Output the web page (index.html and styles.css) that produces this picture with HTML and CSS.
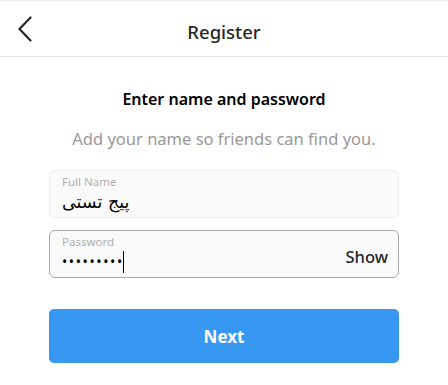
FILE: index.html
```html
<!DOCTYPE html>
<html lang="en">
<head>
<meta charset="utf-8">
<title>Register</title>
<link rel="stylesheet" href="styles.css">
</head>
<body>
<div class="page">
  <header class="header">
    <button class="back" aria-label="Back">
      <svg width="16" height="26" viewBox="0 0 16 26"><path d="M13.5 1.5 L2.5 13 L13.5 24.5" fill="none" stroke="#262626" stroke-width="2.2" stroke-linecap="round" stroke-linejoin="round"/></svg>
    </button>
    <h1 class="title">Register</h1>
  </header>
  <main class="content">
    <h2 class="heading">Enter name and password</h2>
    <p class="sub">Add your name so friends can find you.</p>
    <div class="field">
      <span class="label">Full Name</span>
      <span class="value rtl" dir="rtl">پیج تستی</span>
    </div>
    <div class="field focused">
      <div class="field-main">
        <span class="label">Password</span>
        <span class="value dots">•••••••••<span class="caret"></span></span>
      </div>
      <span class="show">Show</span>
    </div>
    <button class="next">Next</button>
  </main>
</div>
</body>
</html>
```
FILE: styles.css
```css
* { box-sizing: border-box; }
html, body { margin: 0; padding: 0; background: #fff; }
body { font-family: "Noto Sans", "Open Sans", sans-serif; color: #262626; }
.page { width: 448px; border-top: 1px solid #efefef; }
.header {
  height: 56px;
  padding-top: 6px;
  border-bottom: 1px solid #e6e6e6;
  display: flex;
  align-items: center;
  justify-content: center;
  position: relative;
}
.back {
  position: absolute;
  left: 17px;
  top: 14px;
  border: 0;
  background: none;
  padding: 0;
  width: 18px;
  height: 28px;
  display: flex;
  align-items: center;
}
.title { margin: 0; font-size: 18.5px; font-weight: 500; color: #262626; }
.content { padding: 0 49px; display: flex; flex-direction: column; }
.heading {
  margin: 22px 0 0;
  text-align: center;
  font-size: 16px;
  font-weight: 600;
  color: #000;
  line-height: 40px;
}
.sub {
  margin: 9px 0 0;
  text-align: center;
  font-size: 16.5px;
  color: #999;
  line-height: 22px;
}
.field {
  margin-top: 20px;
  height: 48px;
  background: #fafafa;
  border: 1px solid #efefef;
  border-radius: 6px;
  padding: 3px 12px 0;
  display: flex;
  flex-direction: column;
}
.field + .field { margin-top: 12px; }
.field.focused {
  border-color: #a8a8a8;
  flex-direction: row;
  align-items: stretch;
  padding-right: 10px;
}
.field-main { flex: 1; display: flex; flex-direction: column; }
.label { font-size: 11.5px; color: #b0b0b0; line-height: 16px; }
.value { font-size: 16px; color: #262626; line-height: 24px; }
.rtl { direction: rtl; align-self: flex-start; font-family: "DejaVu Sans", sans-serif; font-size: 17.5px; color: #000; }
.dots { font-size: 14px; letter-spacing: 1.6px; display: flex; align-items: center; color: #000; }
.caret { display: inline-block; width: 1px; height: 22px; background: #000; margin-left: -1px; }
.show { align-self: center; font-size: 16.5px; font-weight: 500; color: #262626; padding-top: 2px; }
.next {
  margin-top: 31px;
  height: 54px;
  border: 0;
  border-radius: 5px;
  background: #3897f0;
  color: #fff;
  font-family: inherit;
  font-size: 17px;
  font-weight: 700;
}
```
